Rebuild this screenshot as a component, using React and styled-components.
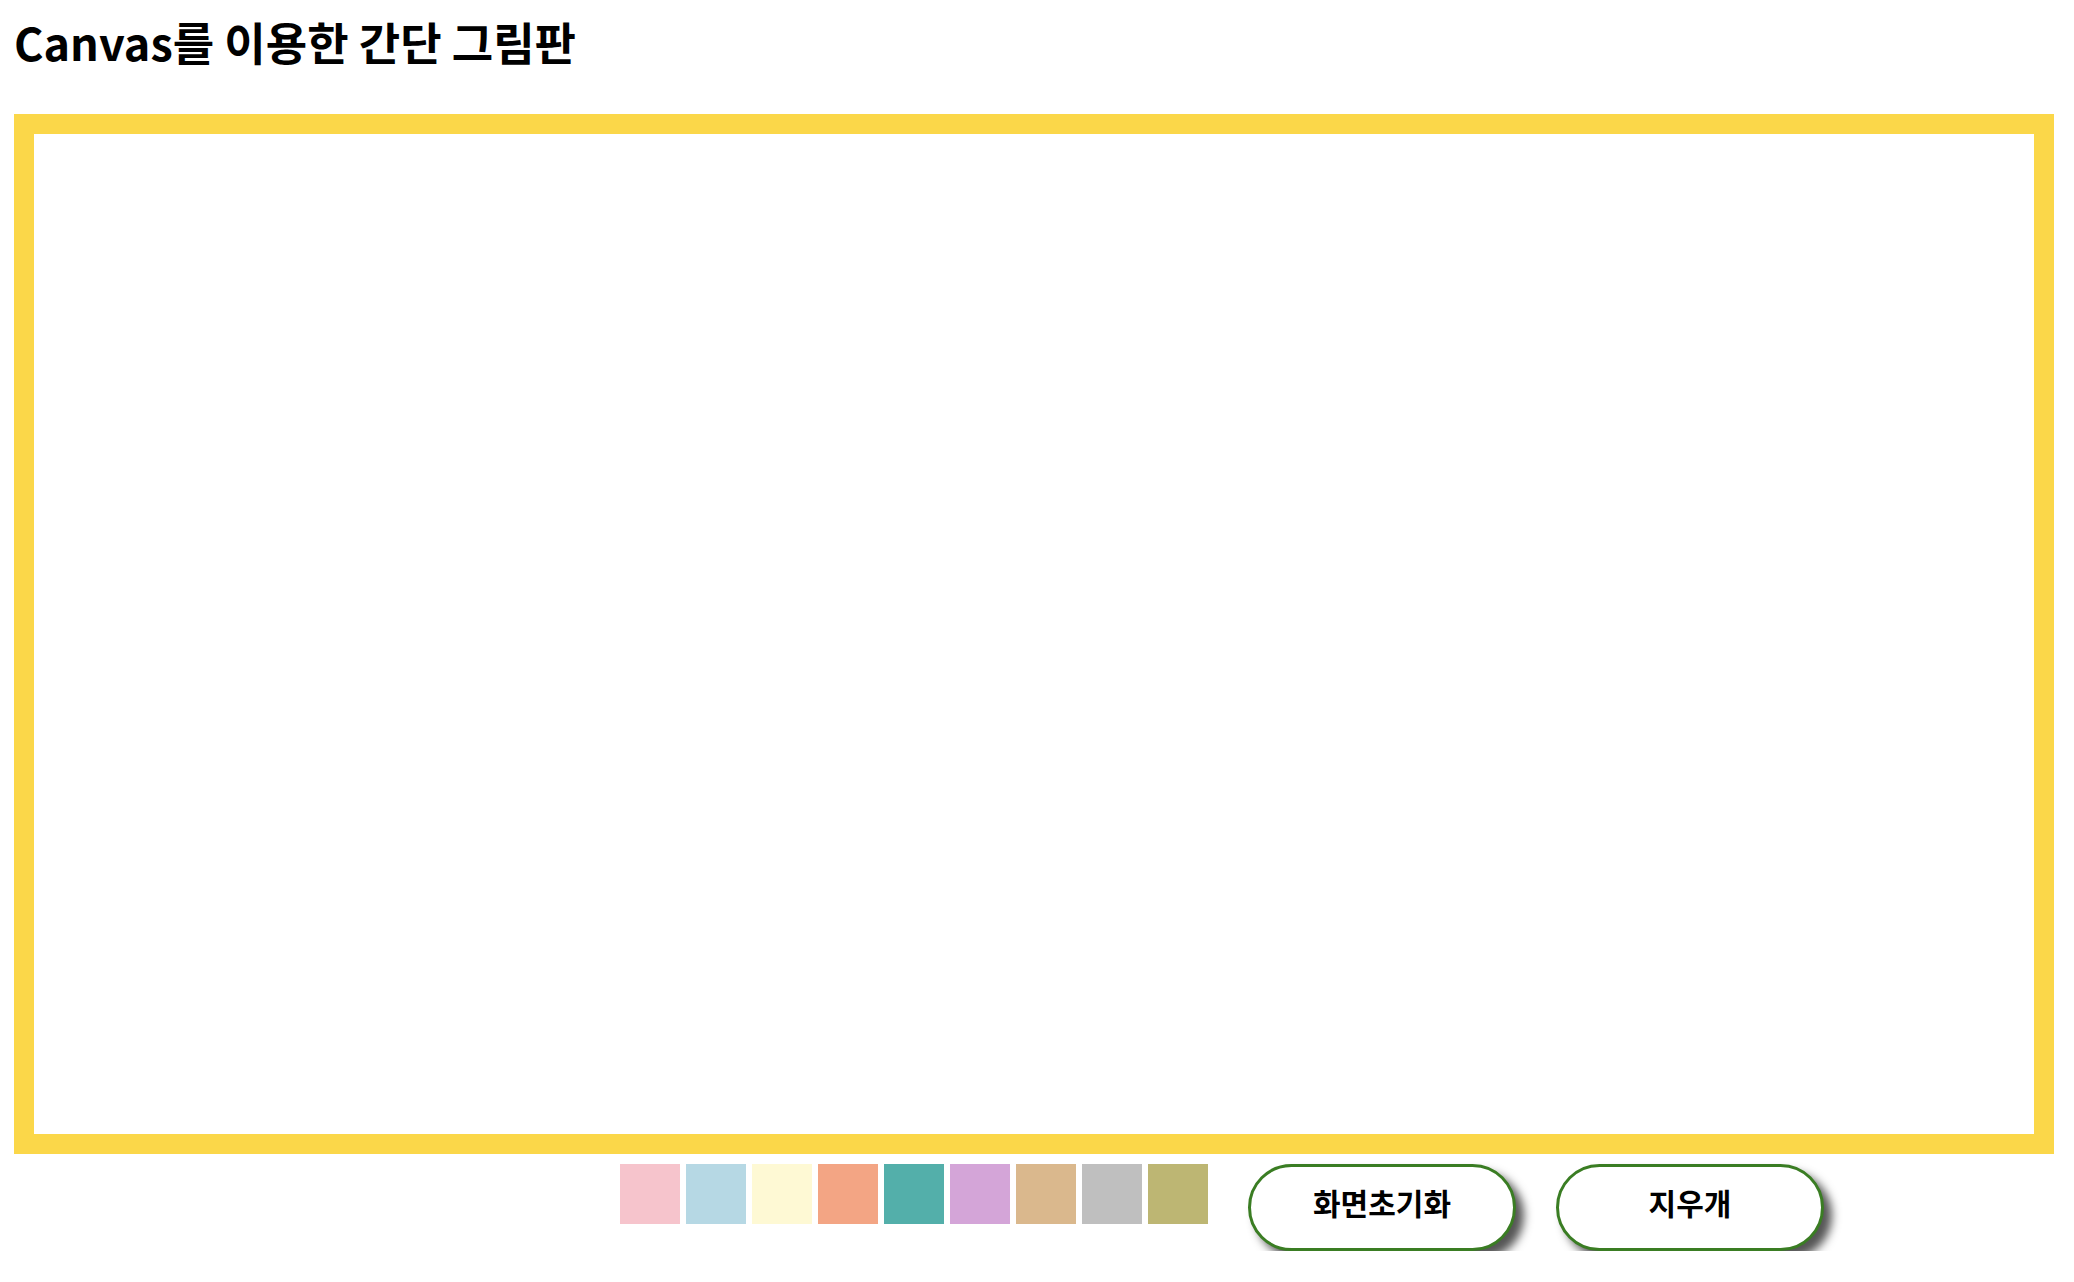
import { useRef } from "react";
import styled, { createGlobalStyle } from "styled-components";

const colorList = [
  "#f6c4cc",
  "#b6d8e4",
  "#fef9d4",
  "#f3a584",
  "#53afaa",
  "#d4a5d8",
  "#dab88d",
  "#bfbfbf",
  "#bdb673",
];

const GlobalStyle = createGlobalStyle`
  body {
    margin: 8px;
    background: #fff;
    font-family: "Noto Sans CJK KR", "Noto Sans", sans-serif;
  }
`;

const Page = styled.div`
  padding: 0 6px;
`;

const Title = styled.h1`
  margin: 5px 0 43px;
  font-size: 45px;
  line-height: 58px;
  font-weight: 700;
  color: #000;
`;

const Board = styled.canvas`
  display: block;
  width: 2000px;
  height: 1000px;
  border: 20px solid #fbd749;
  background: #fff;
`;

const Toolbar = styled.div`
  display: flex;
  align-items: flex-start;
  padding-left: 606px;
  margin-top: 10px;
`;

const Palette = styled.div`
  display: flex;
  gap: 6px;
`;

const Swatch = styled.div`
  width: 60px;
  height: 60px;
  background: ${(props) => props.color};
  cursor: pointer;
`;

const Button = styled.button`
  width: 268px;
  height: 87px;
  margin-left: 40px;
  padding: 0 0 12px;
  background: #fff;
  border: 3.5px solid #3a7d23;
  border-radius: 44px;
  box-shadow: 8px 8px 10px #555;
  font-family: "Noto Sans CJK KR", "Noto Sans", sans-serif;
  font-size: 30px;
  font-weight: 700;
  color: #000;
  cursor: pointer;
`;

const App = () => {
  const canvasRef = useRef(null);

  const handleClear = () => {
    const ctx = canvasRef.current.getContext("2d");
    ctx.clearRect(0, 0, 2000, 1000);
  };

  return (
    <Page>
      <GlobalStyle />
      <Title>Canvas를 이용한 간단 그림판</Title>
      <Board ref={canvasRef} width={2000} height={1000} />
      <Toolbar>
        <Palette>
          {colorList.map((c) => (
            <Swatch key={c} color={c} />
          ))}
        </Palette>
        <Button onClick={handleClear}>화면초기화</Button>
        <Button>지우개</Button>
      </Toolbar>
    </Page>
  );
};

export default App;
